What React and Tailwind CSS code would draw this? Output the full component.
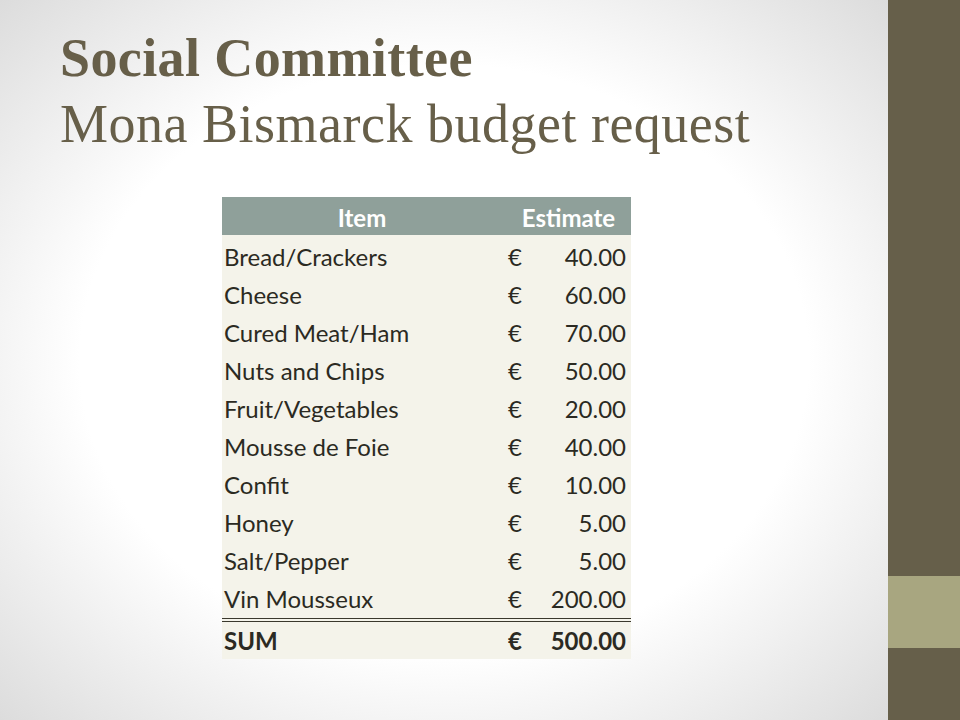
import React from 'react';

const rows = [
  ['Bread/Crackers', '40.00'],
  ['Cheese', '60.00'],
  ['Cured Meat/Ham', '70.00'],
  ['Nuts and Chips', '50.00'],
  ['Fruit/Vegetables', '20.00'],
  ['Mousse de Foie', '40.00'],
  ['Confit', '10.00'],
  ['Honey', '5.00'],
  ['Salt/Pepper', '5.00'],
];

function Row({ item, amount, className = '' }) {
  return (
    <div className={'grid grid-cols-[280px_1fr] h-[38px] pt-[3px] leading-[38px] overflow-hidden ' + className}>
      <div className="pl-[2px]">{item}</div>
      <div className="flex justify-between pl-[6px] pr-[5px]">
        <span>€</span>
        <span>{amount}</span>
      </div>
    </div>
  );
}

export default function App() {
  return (
    <div className="w-[960px] h-[720px] flex overflow-hidden">
      <div className="flex-1 bg-[radial-gradient(ellipse_at_center,#ffffff_58%,#dcdcdc_100%)]">
        <div className="pl-[60px] pt-[25px] text-[54px] leading-[66px] text-[#675f49] font-['Liberation_Serif',serif]">
          <div className="font-bold tracking-[0.4px]">Social Committee</div>
          <div className="tracking-[0.5px]">Mona Bismarck budget request</div>
        </div>

        <div className="ml-[222px] mt-[40px] w-[409px] bg-[#f4f3ea] text-[24px] text-[#2b2a22] font-['Lato',sans-serif]">
          <div className="grid grid-cols-[280px_1fr] h-[38px] bg-[#8fa09a] text-white font-bold leading-[38px] pt-[2px] overflow-hidden">
            <div className="text-center">Item</div>
            <div className="text-center pl-[4px]">Estimate</div>
          </div>
          {rows.map(([item, amount]) => (
            <Row key={item} item={item} amount={amount} />
          ))}
          <Row item="Vin Mousseux" amount="200.00" className="box-content border-b-[4px] border-double border-[#3a382c]" />
          <div className="grid grid-cols-[280px_1fr] h-[37px] leading-[38px] font-bold overflow-hidden">
            <div className="pl-[2px]">SUM</div>
            <div className="flex justify-between pl-[6px] pr-[5px]">
              <span>€</span>
              <span>500.00</span>
            </div>
          </div>
        </div>
      </div>

      <div className="w-[72px] flex flex-col">
        <div className="h-[576px] bg-[#665f4a]"></div>
        <div className="h-[72px] bg-[#a8a680]"></div>
        <div className="flex-1 bg-[#665f4a]"></div>
      </div>
    </div>
  );
}
